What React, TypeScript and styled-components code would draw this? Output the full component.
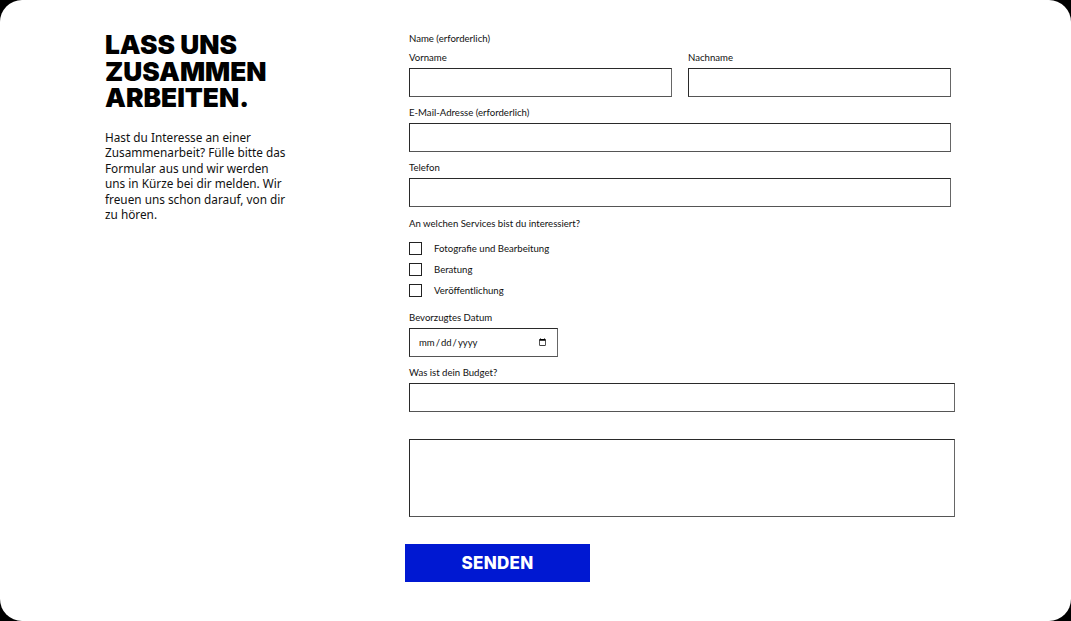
import React from "react";
import styled, { createGlobalStyle } from "styled-components";

const Global = createGlobalStyle`
  html, body { margin: 0; padding: 0; background: #000; }
  body { font-family: Lato, "Noto Sans", sans-serif; color: #111; }
  * { box-sizing: border-box; }
`;

const Page = styled.div`
  width: 1071px;
  height: 621px;
  background: #fff;
  border-radius: 22px;
  overflow: hidden;
  display: grid;
  grid-template-columns: 304px 546px;
  padding-left: 105px;
`;

const Intro = styled.section`
  padding-top: 32px;
`;

const Heading = styled.h1`
  margin: 0;
  font-family: Inter, Lato, sans-serif;
  font-weight: 900;
  font-size: 26.3px;
  line-height: 26.5px;
  letter-spacing: 0;
  color: #000;
  text-transform: uppercase;
`;

const Blurb = styled.p`
  margin: 18px 0 0;
  width: 186px;
  font-family: "Noto Sans", Lato, sans-serif;
  font-size: 11.8px;
  line-height: 15.6px;
  color: #111;
`;

const Form = styled.form`
  padding-top: 33px;
  display: flex;
  flex-direction: column;
`;

const Label = styled.div<{ $mt?: number }>`
  font-size: 9.6px;
  line-height: 12px;
  height: 12px;
  color: #111;
  margin-top: ${(p) => p.$mt ?? 0}px;
`;

const NameRow = styled.div`
  display: grid;
  grid-template-columns: 263px 263px;
  gap: 16px;
  margin-top: 7px;
`;

const Field = styled.div`
  display: flex;
  flex-direction: column;
`;

const TextInput = styled.input<{ $w?: number }>`
  margin-top: 4px;
  height: 29px;
  width: ${(p) => (p.$w ? `${p.$w}px` : "100%")};
  border: 1px solid #2a2a2a;
  border-right-color: #666;
  border-bottom-color: #555;
  background: #fff;
  font-family: inherit;
  font-size: 10px;
  padding: 0 8px;
  outline: none;
`;

const DateInput = styled(TextInput)`
  color: #111;
  font-size: 9.5px;
  padding: 0 8px;
`;

const Area = styled.textarea`
  margin-top: 27px;
  height: 78px;
  width: 546px;
  border: 1px solid #2a2a2a;
  border-right-color: #666;
  border-bottom-color: #555;
  resize: none;
  outline: none;
  font-family: inherit;
`;

const Checks = styled.div`
  margin-top: 8px;
  display: flex;
  flex-direction: column;
`;

const CheckRow = styled.label`
  display: flex;
  align-items: center;
  height: 21px;
  gap: 12px;
  font-size: 9.6px;
  color: #111;
`;

const Box = styled.input`
  appearance: none;
  margin: 0;
  width: 13px;
  height: 13px;
  border: 1px solid #222;
  background: #fff;
`;

const Submit = styled.button`
  margin-top: 27px;
  margin-left: -4px;
  width: 185px;
  height: 38px;
  border: none;
  background: #0018d2;
  color: #fff;
  font-family: Inter, Lato, sans-serif;
  font-weight: 800;
  font-size: 17px;
  letter-spacing: 0.3px;
  cursor: pointer;
`;

export default function App() {
  return (
    <>
      <Global />
      <Page>
        <Intro>
          <Heading>
            Lass uns
            <br />
            zusammen
            <br />
            arbeiten.
          </Heading>
          <Blurb>
            Hast du Interesse an einer Zusammenarbeit? Fülle bitte das Formular
            aus und wir werden uns in Kürze bei dir melden. Wir freuen uns schon
            darauf, von dir zu hören.
          </Blurb>
        </Intro>
        <Form onSubmit={(e) => e.preventDefault()}>
          <Label>Name (erforderlich)</Label>
          <NameRow>
            <Field>
              <Label>Vorname</Label>
              <TextInput type="text" />
            </Field>
            <Field>
              <Label>Nachname</Label>
              <TextInput type="text" />
            </Field>
          </NameRow>
          <Label $mt={10}>E-Mail-Adresse (erforderlich)</Label>
          <TextInput type="email" $w={542} />
          <Label $mt={10}>Telefon</Label>
          <TextInput type="tel" $w={542} />
          <Label $mt={11}>An welchen Services bist du interessiert?</Label>
          <Checks>
            <CheckRow>
              <Box type="checkbox" />
              Fotografie und Bearbeitung
            </CheckRow>
            <CheckRow>
              <Box type="checkbox" />
              Beratung
            </CheckRow>
            <CheckRow>
              <Box type="checkbox" />
              Veröffentlichung
            </CheckRow>
          </Checks>
          <Label $mt={11}>Bevorzugtes Datum</Label>
          <DateInput type="date" $w={149} />
          <Label $mt={10}>Was ist dein Budget?</Label>
          <TextInput type="text" $w={546} />
          <Area />
          <div>
            <Submit type="submit">SENDEN</Submit>
          </div>
        </Form>
      </Page>
    </>
  );
}
